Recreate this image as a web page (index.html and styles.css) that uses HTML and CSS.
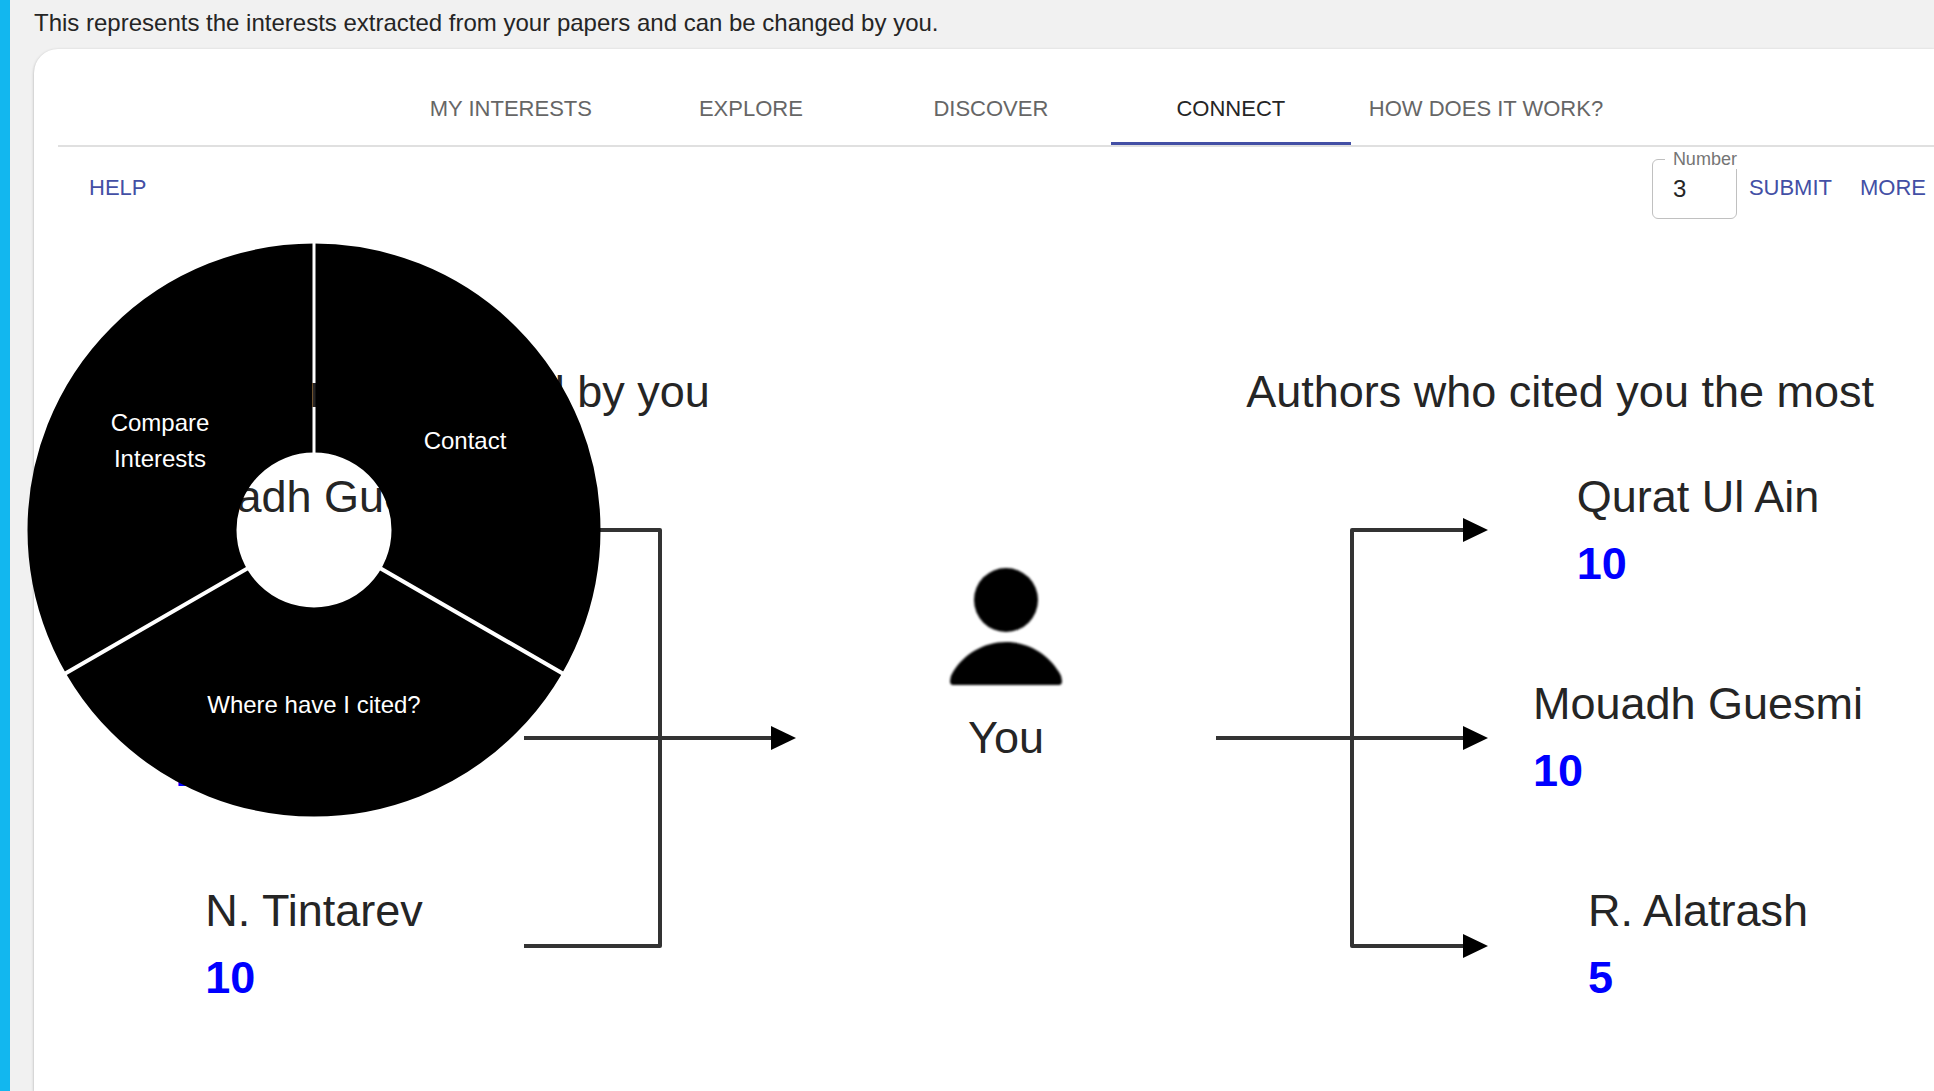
FILE: index.html
```html
<!DOCTYPE html>
<html lang="en">
<head>
<meta charset="utf-8">
<title>Connect</title>
<link rel="stylesheet" href="styles.css">
</head>
<body>
<main class="page">
  <p class="intro">This represents the interests extracted from your papers and can be changed by you.</p>
  <section class="card">
    <nav class="tabs" role="tablist">
      <button class="tab" role="tab">MY INTERESTS</button>
      <button class="tab" role="tab">EXPLORE</button>
      <button class="tab" role="tab">DISCOVER</button>
      <button class="tab tab-active" role="tab" aria-selected="true">CONNECT</button>
      <button class="tab" role="tab">HOW DOES IT WORK?</button>
    </nav>
    <div class="toolbar">
      <button class="action">HELP</button>
      <div class="toolbar-right">
        <div class="field">
          <label class="field-label" for="number">Number</label>
          <input class="field-input" id="number" type="text" inputmode="numeric" value="3">
        </div>
        <div class="actions">
          <button class="action">SUBMIT</button>
          <button class="action">MORE</button>
        </div>
      </div>
    </div>
    <div class="titles">
      <h2 class="title">Authors most cited by you</h2>
      <h2 class="title">Authors who cited you the most</h2>
    </div>
    <div class="network">
      <div class="authors">
        <div class="author">
          <span>Mouadh Guesmi</span>
          <strong class="count">10</strong>
          <div class="menu">
            <svg class="menu-disc" viewBox="0 0 574 574" aria-hidden="true">
              <defs>
                <mask id="slices">
                  <circle cx="287" cy="287" r="182" fill="none" stroke="#fff" stroke-width="209"/>
                  <path d="M287 287V0" stroke="#000" stroke-width="3"/>
                  <path d="M287 287L547 437M287 287L27 437" stroke="#000" stroke-width="4"/>
                </mask>
              </defs>
              <rect width="574" height="574" mask="url(#slices)"/>
            </svg>
            <button class="menu-item menu-compare">Compare<br>Interests</button>
            <button class="menu-item menu-contact">Contact</button>
            <button class="menu-item menu-cited">Where have I cited?</button>
          </div>
        </div>
        <div class="author"><span>P. Brusilovsky</span><strong class="count">10</strong></div>
        <div class="author"><span>N. Tintarev</span><strong class="count">10</strong></div>
      </div>
      <svg class="edges" viewBox="0 0 272 550" aria-hidden="true">
        <path class="edge" d="M0 67H136V483H0M0 275H250"/>
        <path d="M247 263L272 275L247 287Z"/>
      </svg>
      <div class="you">
        <svg class="person" viewBox="0 0 120 124" aria-hidden="true">
          <circle cx="60" cy="34" r="32"/>
          <path d="M7 119Q4 119 4 115Q4 110 7 106C18 88 38 76 60 76S102 88 113 106Q116 110 116 115Q116 119 113 119Z"/>
        </svg>
        <span>You</span>
      </div>
      <svg class="edges" viewBox="0 0 272 550" aria-hidden="true">
        <path class="edge" d="M250 67H136V483H250M0 275H250"/>
        <path d="M247 55L272 67L247 79ZM247 263L272 275L247 287ZM247 471L272 483L247 495Z"/>
      </svg>
      <div class="authors">
        <div class="author"><span>Qurat Ul Ain</span><strong class="count">10</strong></div>
        <div class="author"><span>Mouadh Guesmi</span><strong class="count">10</strong></div>
        <div class="author"><span>R. Alatrash</span><strong class="count">5</strong></div>
      </div>
    </div>
  </section>
</main>
</body>
</html>
```
FILE: styles.css
```css
* { box-sizing: border-box; }

body {
  margin: 0;
  background: #f1f1f1;
  color: #252525;
  font-family: "Liberation Sans", Arial, sans-serif;
  overflow-x: hidden;
}

button {
  border: 0;
  background: none;
  font: inherit;
  cursor: pointer;
}

.page {
  display: flex;
  flex-direction: column;
  min-height: 100vh;
  padding: 5px 0 0 24px;
  border-left: 10px solid #12b7ef;
}

.intro {
  margin: 0 0 8px;
  font-size: 24px;
  line-height: 36px;
}

.card {
  flex: 1;
  padding: 24px 0 72px 24px;
  border-radius: 24px 0 0 0;
  background: #fff;
  box-shadow: 0 1px 3px rgba(0, 0, 0, 0.3);
}

.tabs {
  display: flex;
  justify-content: center;
  padding-left: 20px;
  border-bottom: 2px solid #e0e0e0;
}

.tab {
  min-width: 240px;
  height: 72px;
  padding: 0 18px;
  border-top: 3px solid transparent;
  border-bottom: 3px solid transparent;
  color: #666;
  font-size: 22px;
}

.tab-active {
  border-bottom-color: #434fa5;
  color: #252525;
}

.toolbar {
  display: flex;
  justify-content: space-between;
  align-items: flex-start;
  padding: 12px 0 0 23px;
}

.toolbar-right {
  display: flex;
  gap: 4px;
}

.actions {
  display: flex;
  align-items: flex-start;
  gap: 12px;
}

.action {
  height: 58px;
  padding: 0 8px;
  color: #434fa5;
  font-size: 22px;
}

.field { position: relative; }

.field-input {
  display: block;
  width: 85px;
  height: 60px;
  padding: 0 20px;
  border: 1px solid #c0c0c0;
  border-radius: 6px;
  background: #fff;
  color: #252525;
  font: inherit;
  font-size: 24px;
}

.field-label {
  position: absolute;
  top: -10px;
  left: 13px;
  padding-left: 8px;
  background: #fff;
  color: #757575;
  font-size: 18px;
  line-height: 20px;
}

.titles {
  display: flex;
  justify-content: space-between;
  padding: 139px 60px 38px 134px;
}

.title,
.network {
  margin: 0;
  font-size: 45px;
  font-weight: 400;
  line-height: 67px;
}

.network {
  display: grid;
  grid-template-columns: repeat(5, 1fr);
  justify-items: center;
  padding: 0 63px 0 83px;
}

.authors {
  display: flex;
  flex-direction: column;
  align-items: center;
  gap: 73px;
}

.author {
  position: relative;
  display: flex;
  flex-direction: column;
  white-space: nowrap;
}

.count { color: #00f; }

.edges {
  width: 272px;
  height: 550px;
}

.edge {
  fill: none;
  stroke: #333;
  stroke-width: 4;
  stroke-linejoin: round;
}

.you {
  display: flex;
  flex-direction: column;
  align-items: center;
  gap: 14px;
  padding-top: 103px;
}

.person {
  width: 120px;
  height: 124px;
  filter: blur(1px);
}

/* Radial menu opened on the first author */
.menu {
  position: absolute;
  top: 50%;
  left: 50%;
  z-index: 1;
  width: 574px;
  height: 574px;
  transform: translate(-50%, -50%);
}

.menu-disc { display: block; }

.menu-item {
  position: absolute;
  width: 240px;
  padding: 0;
  color: #fff;
  font-size: 24px;
  line-height: 36px;
}

.menu-compare {
  top: 162px;
  left: 13px;
}

.menu-contact {
  top: 180px;
  right: 16px;
}

.menu-cited {
  top: 444px;
  left: 167px;
}
```
